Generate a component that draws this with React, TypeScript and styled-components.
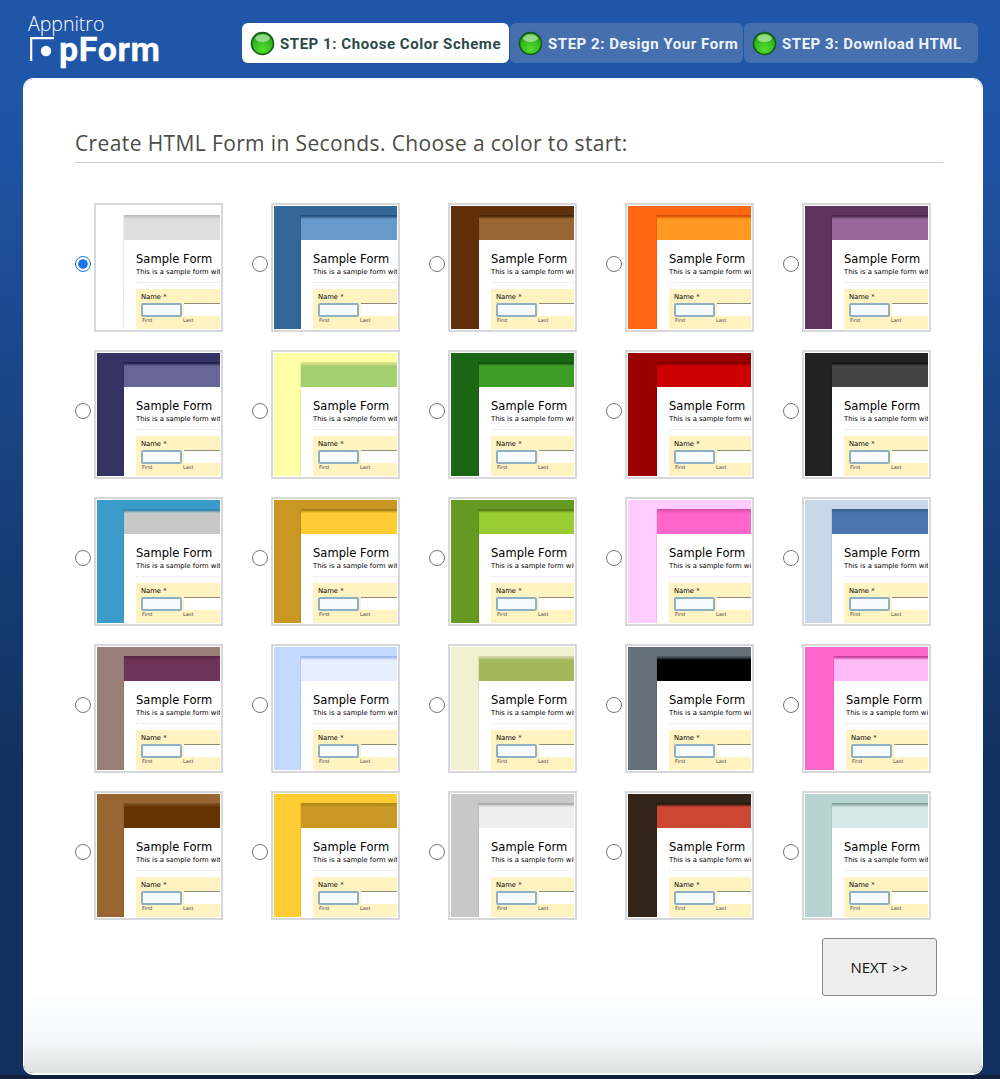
import styled, { createGlobalStyle } from "styled-components";

const GlobalStyle = createGlobalStyle`
  html, body {
    margin: 0;
    padding: 0;
  }
  body {
    height: 1079px;
    background: linear-gradient(180deg, #2056a8 0, #2056a8 90px, #12305e 780px, #12305e 1074px, #111f3a 1076px);
  }
`;

const schemes = [
  { side: "#ffffff", head: "#dedede", edge: "#bdbdbd" },
  { side: "#336699", head: "#6699cc", edge: "#234f7c" },
  { side: "#5f2f0a", head: "#996633", edge: "#4a2406" },
  { side: "#ff6611", head: "#ff9922", edge: "#d94f06" },
  { side: "#5f3260", head: "#996699", edge: "#4a254b" },
  { side: "#333366", head: "#666699", edge: "#1f1f4c" },
  { side: "#ffffa6", head: "#a3cf6f", edge: "#e2e28c" },
  { side: "#1a6614", head: "#3f9c26", edge: "#11500c" },
  { side: "#990000", head: "#cc0000", edge: "#7c0000" },
  { side: "#222222", head: "#444444", edge: "#111111" },
  { side: "#3b9ccc", head: "#c8c8c8", edge: "#2c84b0" },
  { side: "#c99722", head: "#ffcc33", edge: "#a87c14" },
  { side: "#669922", head: "#99cc33", edge: "#527f14" },
  { side: "#ffccff", head: "#ff66cc", edge: "#d94fa8" },
  { side: "#c8d8e8", head: "#4a75ae", edge: "#3a5f90" },
  { side: "#997f78", head: "#6e3358", edge: "#5a2646" },
  { side: "#c4d9ff", head: "#e6edfc", edge: "#9ab8ec" },
  { side: "#f2f0d0", head: "#a3b85a", edge: "#d8d6b0" },
  { side: "#667078", head: "#000000", edge: "#4e565c" },
  { side: "#ff66cc", head: "#ffbbf8", edge: "#c73f98", shift: 2 },
  { side: "#996633", head: "#663300", edge: "#7c5024" },
  { side: "#ffcc33", head: "#c99722", edge: "#b0851c" },
  { side: "#c8c8c8", head: "#eeeeee", edge: "#a8a8a8" },
  { side: "#33241a", head: "#cc4733", edge: "#221710" },
  { side: "#b8d4d2", head: "#d5e8e6", edge: "#84a09e" },
];

// the thumbnails in the third and fourth columns sit a little further right
const columnShift = [0, 0, 1, 2, 0];

const steps = ["STEP 1: Choose Color Scheme", "STEP 2: Design Your Form", "STEP 3: Download HTML"];

const Orb = () => (
  <OrbIcon width="25" height="25" viewBox="0 0 26 26">
    <defs>
      <radialGradient id="orbFill" cx="50%" cy="75%" r="70%">
        <stop offset="0%" stopColor="#4fe02c" />
        <stop offset="70%" stopColor="#34b41e" />
        <stop offset="100%" stopColor="#1f8c18" />
      </radialGradient>
    </defs>
    <circle cx="13" cy="13" r="11.5" fill="url(#orbFill)" stroke="#14591a" strokeWidth="1.5" />
    <ellipse cx="13" cy="7.5" rx="7.5" ry="4" fill="#b4e8a8" opacity="0.75" />
  </OrbIcon>
);

const LogoMark = () => (
  <LogoIcon width="26" height="25" viewBox="0 0 26 25">
    <path d="M24 1.2H1.2V24" fill="none" stroke="#fff" strokeWidth="2.2" />
    <circle cx="16" cy="14" r="5.2" fill="#fff" />
  </LogoIcon>
);

const Thumbnail = ({ side, head, edge, shift }: { side: string; head: string; edge: string; shift: number }) => (
  <ThumbFrame>
    <ThumbCanvas $side={side} $shift={shift}>
      <ThumbPage>
        <ThumbHead $head={head} $edge={edge} />
        <ThumbBody>
          <ThumbTitle>Sample Form</ThumbTitle>
          <ThumbDesc>This is a sample form with</ThumbDesc>
          <ThumbRule />
          <ThumbField>
            <ThumbLabel>Name *</ThumbLabel>
            <ThumbInputs>
              <ThumbInputFocus />
              <ThumbInput />
            </ThumbInputs>
            <ThumbHints>
              <ThumbHint>First</ThumbHint>
              <ThumbHint>Last</ThumbHint>
            </ThumbHints>
          </ThumbField>
        </ThumbBody>
      </ThumbPage>
    </ThumbCanvas>
  </ThumbFrame>
);

export default function App() {
  return (
    <>
      <GlobalStyle />
      <Page>
        <Header>
          <Logo>
            <Vendor>Appnitro</Vendor>
            <LogoRow>
              <LogoMark />
              <Product>pForm</Product>
            </LogoRow>
          </Logo>
          <Tabs>
            {steps.map((step, i) => (
              <Tab key={step} $active={i === 0} $width={[267, 233, 234][i]}>
                <Orb />
                <TabLabel>{step}</TabLabel>
              </Tab>
            ))}
          </Tabs>
        </Header>
        <Card>
          <Heading>Create HTML Form in Seconds. Choose a color to start:</Heading>
          <Grid>
            {schemes.map(({ side, head, edge, shift }, i) => (
              <Choice key={side + head}>
                <Radio type="radio" name="scheme" defaultChecked={i === 0} />
                <Thumbnail side={side} head={head} edge={edge} shift={(shift || 0) + columnShift[i % 5]} />
              </Choice>
            ))}
          </Grid>
          <Actions>
            <NextButton>
              NEXT <Arrows>&gt;&gt;</Arrows>
            </NextButton>
          </Actions>
        </Card>
      </Page>
    </>
  );
}

const Page = styled.div`
  width: 1000px;
  height: 1079px;
  overflow: hidden;
  display: flex;
  flex-direction: column;
`;

const Header = styled.header`
  height: 78px;
  flex: none;
  display: flex;
  box-sizing: border-box;
  padding: 14px 22px 0 28px;
  justify-content: space-between;
`;

const Logo = styled.div`
  width: 140px;
  color: #fff;
`;

const Vendor = styled.div`
  font-family: "Open Sans", sans-serif;
  font-weight: 300;
  font-size: 19.5px;
  line-height: 20px;
`;

const LogoRow = styled.div`
  display: flex;
  align-items: flex-start;
  gap: 3px;
  padding-left: 2px;
  margin-top: 3px;
`;

const LogoIcon = styled.svg`
  flex: none;
`;

const Product = styled.div`
  font-family: "Roboto", sans-serif;
  font-weight: 700;
  font-size: 34px;
  line-height: 30px;
  letter-spacing: 0.6px;
  margin-top: -3px;
  -webkit-text-stroke: 0.3px #fff;
`;

const Tabs = styled.nav`
  display: flex;
  gap: 1px;
  height: 40px;
  margin-top: 9px;
`;

const OrbIcon = styled.svg`
  flex: none;
`;

const Tab = styled.div<{ $active: boolean; $width: number }>`
  width: ${({ $width }) => $width}px;
  box-sizing: border-box;
  display: flex;
  align-items: center;
  gap: 5px;
  padding-left: 8px;
  border-radius: 6px;
  background: ${({ $active }) => ($active ? "#ffffff" : "#4570ad")};
  color: ${({ $active }) => ($active ? "#2c4a4a" : "#eef3fa")};
  font-family: "Roboto", sans-serif;
  font-weight: 700;
  font-size: 15px;
  letter-spacing: 0.55px;
  white-space: nowrap;
`;

const TabLabel = styled.span`
  margin-top: 1px;
`;

const Card = styled.main`
  flex: 1;
  margin: 0 17px 4px 23px;
  box-sizing: border-box;
  padding: 49px 39px 0 51px;
  border: 1px solid #ffffff;
  border-bottom-width: 2px;
  border-radius: 10px;
  background: linear-gradient(180deg, #ffffff 0, #ffffff 915px, #fbfcfd 925px, #f7f8f9 960px, #e0e1e1 992px) padding-box;
`;

const Heading = styled.h1`
  margin: 0;
  height: 35px;
  box-sizing: border-box;
  border-bottom: 1px solid #cfcfcf;
  color: #4c4c46;
  font-family: "Open Sans", sans-serif;
  font-weight: 400;
  font-size: 21px;
  line-height: 30px;
  letter-spacing: 0.38px;
  white-space: nowrap;
`;

const Grid = styled.div`
  display: grid;
  grid-template-columns: repeat(5, 177px);
  grid-auto-rows: 147px;
  margin-top: 40px;
  width: 885px;
`;

const Choice = styled.label`
  display: flex;
  align-items: flex-start;
  gap: 3px;
`;

const Radio = styled.input`
  width: 16px;
  height: 16px;
  margin: 53px 0 0 0;
  accent-color: #1a73e8;
  flex: none;
`;

const ThumbFrame = styled.div`
  width: 129px;
  height: 129px;
  box-sizing: border-box;
  border: 2px solid #d8d8da;
  background: #fff;
  padding: 1px;
  overflow: hidden;
`;

const ThumbCanvas = styled.div<{ $side: string; $shift: number }>`
  width: 123px;
  height: 123px;
  box-sizing: border-box;
  background: ${({ $side }) => $side};
  padding: 9px 0 0 ${({ $shift }) => 27 + $shift}px;
  overflow: hidden;
`;

const ThumbPage = styled.div`
  height: 100%;
  width: 100%;
  background: #fff;
  display: flex;
  flex-direction: column;
  box-shadow: -1px 0 0 rgba(0, 0, 0, 0.07);
`;

const ThumbHead = styled.div<{ $head: string; $edge: string }>`
  height: 25px;
  flex: none;
  background: linear-gradient(180deg, ${({ $edge }) => $edge} 0, ${({ $edge }) => $edge} 1px, ${({ $head }) => $head} 4px);
`;

const ThumbBody = styled.div`
  flex: 1;
  padding: 12px 0 0 12px;
  overflow: hidden;
  white-space: nowrap;
  font-family: "DejaVu Sans", sans-serif;
  color: #000;
`;

const ThumbTitle = styled.div`
  font-size: 11.5px;
  line-height: 15px;
  letter-spacing: 0.05px;
`;

const ThumbDesc = styled.div`
  font-size: 6.8px;
  line-height: 10px;
`;

const ThumbRule = styled.div`
  border-top: 1px dotted #e2e2e2;
  margin: 5px 0 6px;
`;

const ThumbField = styled.div`
  background: #fff3c2;
  height: 42px;
  box-sizing: border-box;
  padding: 4px 0 0 5px;
`;

const ThumbLabel = styled.div`
  font-size: 6.8px;
  line-height: 9px;
`;

const ThumbInputs = styled.div`
  display: flex;
  gap: 2px;
  margin-top: 1px;
`;

const ThumbInputFocus = styled.div`
  width: 41px;
  height: 14px;
  flex: none;
  box-sizing: border-box;
  background: #f6fbff;
  border: 2px solid #8fb0c4;
  border-radius: 2px;
`;

const ThumbInput = styled.div`
  flex: 1;
  height: 13px;
  box-sizing: border-box;
  background: #fff;
  border-top: 1px solid #8c8c78;
`;

const ThumbHints = styled.div`
  display: flex;
  gap: 31px;
  margin-top: -1px;
  padding-left: 1px;
`;

const ThumbHint = styled.span`
  font-size: 5px;
  line-height: 8px;
  color: #444;
  width: 10px;
`;

const Actions = styled.div`
  display: flex;
  justify-content: flex-end;
  width: 862px;
`;

const NextButton = styled.button`
  width: 115px;
  height: 58px;
  padding: 0;
  border: 1px solid #888;
  border-radius: 3px;
  background: #eeeeee;
  color: #111;
  font-family: "Open Sans", sans-serif;
  font-size: 15px;
`;

const Arrows = styled.span`
  font-size: 12px;
  font-weight: 600;
  margin-left: 2px;
  letter-spacing: 1px;
`;
